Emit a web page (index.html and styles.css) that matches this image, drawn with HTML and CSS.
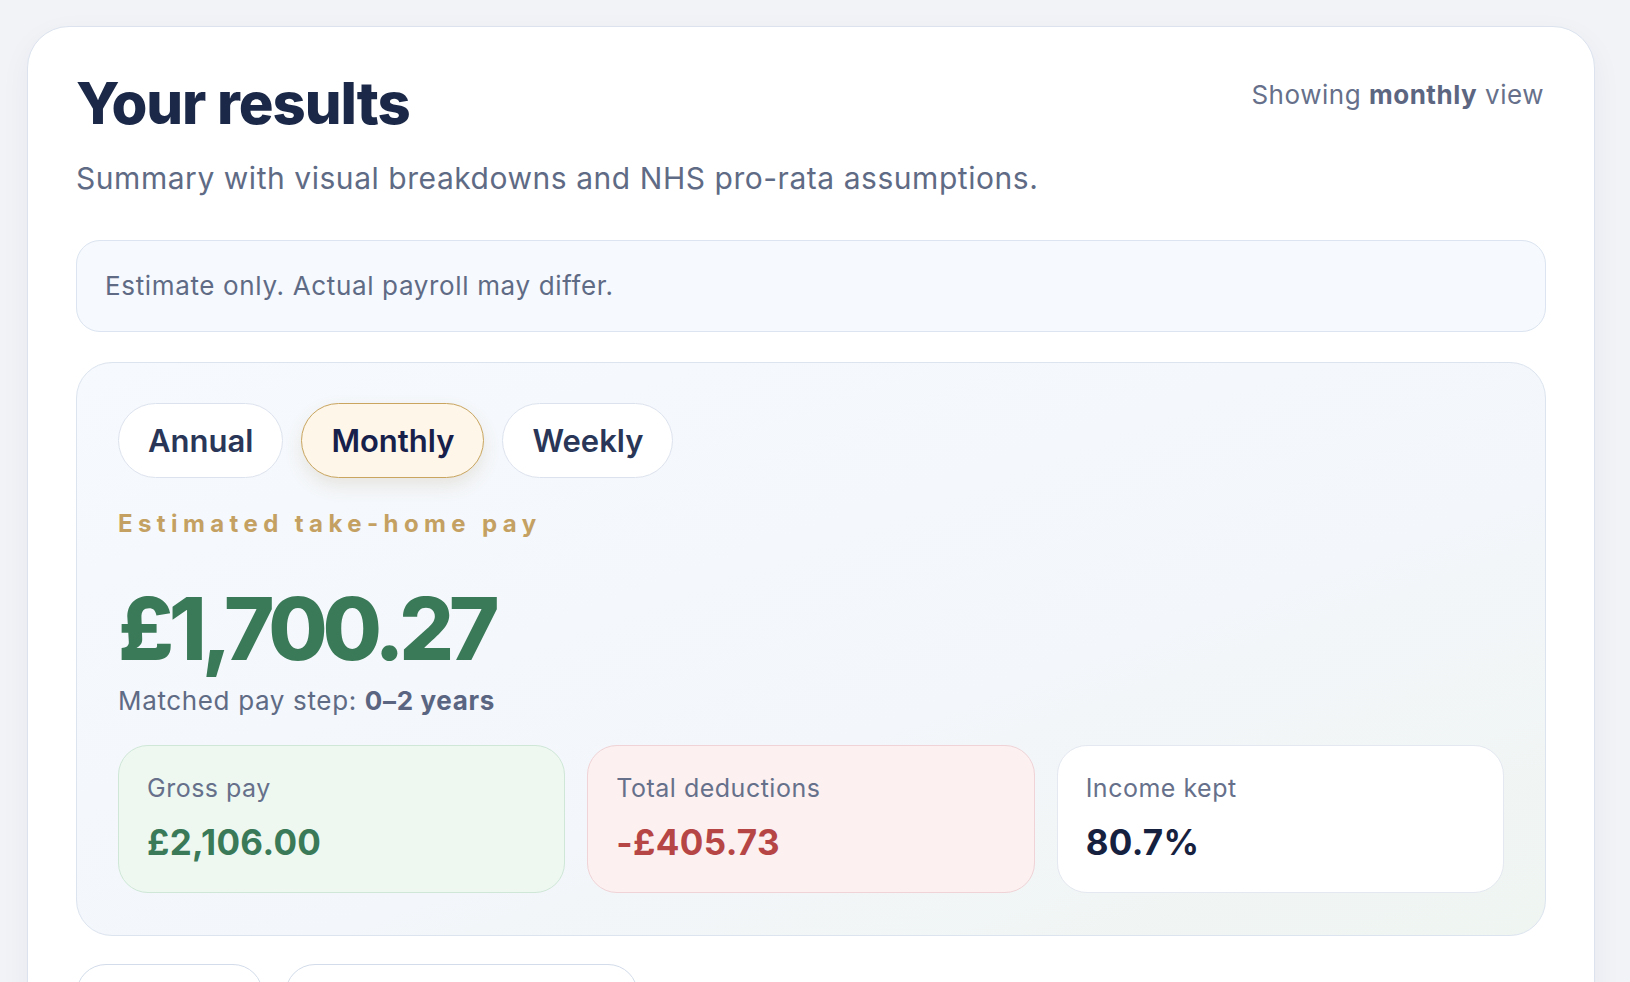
FILE: index.html
```html
<!DOCTYPE html>
<html>
    <head>
        <title>Your results</title>
        <link rel="stylesheet" href="styles.css">
    </head>

    <body>
        <div class="page">
            <section class="results">
                <div class="results-head">
                    <div>
                        <h1>Your results</h1>
                        <p class="lead">Summary with visual breakdowns and NHS pro-rata assumptions.</p>
                    </div>
                    <p class="view-note">Showing <b>monthly</b> view</p>
                </div>

                <div class="notice">Estimate only. Actual payroll may differ.</div>

                <div class="panel">
                    <div class="periods">
                        <button class="pill">Annual</button>
                        <button class="pill active">Monthly</button>
                        <button class="pill">Weekly</button>
                    </div>
                    <p class="eyebrow">Estimated take-home pay</p>
                    <p class="amount">£1,700.27</p>
                    <p class="step">Matched pay step: <b>0–2 years</b></p>

                    <div class="stats">
                        <div class="stat gross">
                            <span class="stat-label">Gross pay</span>
                            <span class="stat-value">£2,106.00</span>
                        </div>
                        <div class="stat deduct">
                            <span class="stat-label">Total deductions</span>
                            <span class="stat-value">-£405.73</span>
                        </div>
                        <div class="stat kept">
                            <span class="stat-label">Income kept</span>
                            <span class="stat-value">80.7%</span>
                        </div>
                    </div>
                </div>

                <div class="tabs">
                    <button class="tab">Summary</button>
                    <button class="tab">Deductions breakdown</button>
                </div>
            </section>
        </div>
    </body>
</html>
```

FILE: styles.css
```css
html,body{margin: 0;padding: 0;}
body{background: #f1f3f7;font-family: "Inter", "Liberation Sans", sans-serif;color: #1b2847;overflow: hidden;height: 982px;}
.page{padding: 26px 35px 0 27px;}
.results{background: #fff;border: 1.5px solid #dce3ee;border-radius: 42px;padding: 40px 48px 60px 48px;box-shadow: 0 10px 30px rgba(30,45,80,0.05);}

.results-head{display: flex;justify-content: space-between;align-items: flex-start;}
h1{margin: 0;font-size: 58px;line-height: 72px;font-weight: 800;letter-spacing: -0.018em;color: #1b2847;}
.lead{margin: 19px 0 0 0;font-size: 30px;line-height: 40px;letter-spacing: 0.018em;color: #5f6b85;}
.view-note{margin: 11px 2px 0 0;font-size: 26px;line-height: 34px;letter-spacing: 0.02em;color: #66708a;}
.view-note b{font-weight: 700;color: #5c6681;}

.notice{margin-top: 42px;background: #f6f9fd;border: 1.5px solid #dbe4f0;border-radius: 24px;padding: 25px 28px;font-size: 26px;line-height: 40px;letter-spacing: 0.025em;color: #5f6b85;}

.panel{margin-top: 30px;border: 1.5px solid #dce4ef;border-radius: 36px;padding: 40px 41px 42px 41px;background: linear-gradient(160deg, #f6f9fd 0%, #f3f6fa 60%, #eff5f1 100%);}

.periods{display: flex;gap: 18px;}
.pill{height: 75px;padding: 0 29px;border-radius: 999px;border: 1.5px solid #dde3ee;background: #fff;font-family: inherit;font-size: 31px;font-weight: 600;letter-spacing: 0;color: #2a3657;}
.pill.active{background: #fdf6e9;border-color: #c9a55f;color: #16204a;box-shadow: 0 8px 18px rgba(150,120,60,0.14);}

.eyebrow{margin: 31px 0 0 0;font-size: 24px;line-height: 30px;font-weight: 700;letter-spacing: 0.225em;color: #c4a162;}
.amount{margin: 42px 0 0 0;font-size: 86px;line-height: 96px;font-weight: 800;letter-spacing: -0.06em;color: #3a7a58;}
.step{margin: 7px 0 0 0;font-size: 26px;line-height: 34px;letter-spacing: 0.025em;color: #5f6b85;}
.step b{font-weight: 700;color: #5a6582;}

.stats{margin-top: 27px;display: grid;grid-template-columns: 1fr 1fr 1fr;gap: 22px;}
.stat{display: flex;flex-direction: column;height: 148px;box-sizing: border-box;padding: 25px 28px;border-radius: 30px;border: 1.5px solid #e4e8f0;background: #fff;}
.stat-label{font-size: 25px;line-height: 34px;letter-spacing: 0.02em;color: #66708a;}
.stat-value{margin-top: 15px;font-size: 35px;line-height: 44px;font-weight: 700;letter-spacing: 0.01em;color: #16213f;}
.stat.gross{background: #eef8f1;border-color: #cfe7d7;}
.stat.gross .stat-value{color: #3a7a58;}
.stat.deduct{background: #fcf0f1;border-color: #efd3d6;}
.stat.deduct .stat-value{color: #b64545;}

.tabs{margin-top: 28px;display: flex;gap: 22px;}
.tab{height: 90px;padding: 0 30px;border-radius: 30px;border: 1.5px solid #d3dcea;background: #fff;font-family: inherit;font-size: 26px;font-weight: 600;color: #2a3657;white-space: nowrap;}
.tab:first-child{width: 187px;}
.tab:last-child{width: 353px;}
```
